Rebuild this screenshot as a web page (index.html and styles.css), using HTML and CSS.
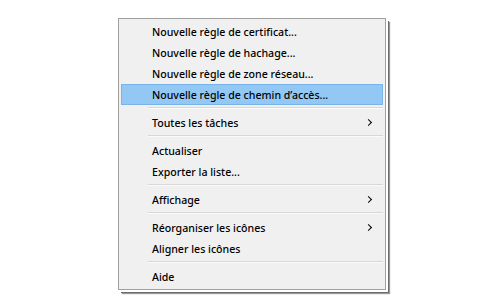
FILE: index.html
```html
<!DOCTYPE html>
<html lang="fr">
<head>
<meta charset="utf-8">
<title>Menu</title>
<link rel="stylesheet" href="styles.css">
</head>
<body>
<div class="stage">
  <div class="menu">
    <div class="item">Nouvelle règle de certificat...</div>
    <div class="item">Nouvelle règle de hachage...</div>
    <div class="item">Nouvelle règle de zone réseau...</div>
    <div class="item active">Nouvelle règle de chemin d’accès...</div>
    <div class="sep"></div>
    <div class="item sub">Toutes les tâches<span class="arrow"></span></div>
    <div class="sep"></div>
    <div class="item">Actualiser</div>
    <div class="item">Exporter la liste...</div>
    <div class="sep"></div>
    <div class="item sub">Affichage<span class="arrow"></span></div>
    <div class="sep"></div>
    <div class="item sub">Réorganiser les icônes<span class="arrow"></span></div>
    <div class="item">Aligner les icônes</div>
    <div class="sep"></div>
    <div class="item">Aide</div>
  </div>
</div>
</body>
</html>
```
FILE: styles.css
```css
html, body {
  margin: 0;
  padding: 0;
  background: #ffffff;
}
body {
  width: 483px;
  height: 308px;
  overflow: hidden;
  font-family: "Noto Sans", "Open Sans", sans-serif;
  font-size: 10.6px;
  font-weight: 500;
  color: #000;
}
.stage {
  padding: 18px 0 0 118px;
}
.menu {
  width: 262px;
  padding: 2px;
  background: #f0f0f0;
  border: 1px solid #a0a0a0;
  box-shadow: 2px 2px 0 #ffffff, 3px 3px 0 #6a6a6a, 4px 4px 1px #9a9a9a;
  display: flex;
  flex-direction: column;
}
.item {
  height: 21px;
  box-sizing: border-box;
  padding-left: 30px;
  display: flex;
  align-items: center;
  justify-content: space-between;
  border: 1px solid transparent;
  white-space: nowrap;
}
.item.active {
  background: #94c8f4;
  border-color: #78b4ea;
}
.arrow {
  width: 4px;
  height: 4px;
  margin-right: 11px;
  border-right: 1.7px solid #000;
  border-top: 1.7px solid #000;
  transform: rotate(45deg);
}
.sep {
  height: 1px;
  margin: 2px 0 3px 27px;
  background: #d7d7d7;
  border-bottom: 1px solid #fbfbfb;
}
```
